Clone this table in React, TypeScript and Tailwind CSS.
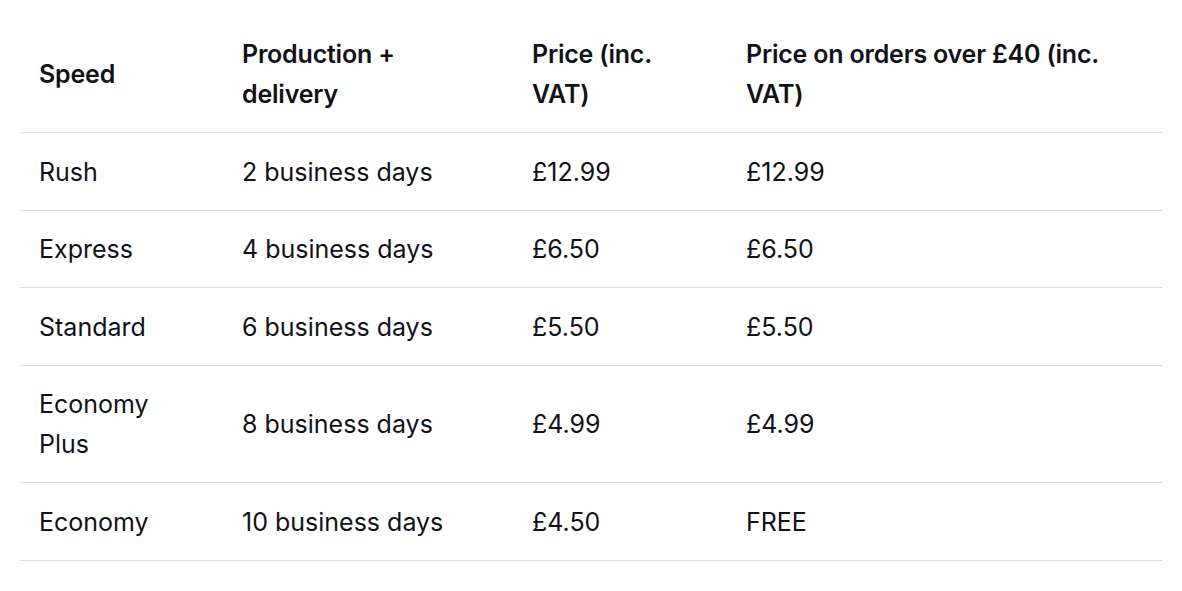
import React from "react";

const rows = [
  ["Rush", "2 business days", "£12.99", "£12.99"],
  ["Express", "4 business days", "£6.50", "£6.50"],
  ["Standard", "6 business days", "£5.50", "£5.50"],
  ["Economy Plus", "8 business days", "£4.99", "£4.99"],
  ["Economy", "10 business days", "£4.50", "FREE"],
];

export default function App() {
  return (
    <div className="min-h-screen bg-white px-[20px] pt-[15px]" style={{ fontFamily: "Inter, 'Noto Sans', sans-serif" }}>
      <table className="w-[1142px] table-fixed border-collapse text-[25px] leading-[40px] text-[#111118]">
        <colgroup>
          <col className="w-[203px]" />
          <col className="w-[290px]" />
          <col className="w-[214px]" />
          <col className="w-[435px]" />
        </colgroup>
        <thead>
          <tr className="border-b border-[#dcdcdc]">
            <th className="pt-[19px] pb-[18px] pl-[19px] pr-[24px] text-left align-middle font-semibold tracking-[-0.2px]">Speed</th>
            <th className="pt-[19px] pb-[18px] pl-[19px] pr-[24px] text-left align-middle font-semibold tracking-[-0.2px]">Production + delivery</th>
            <th className="pt-[19px] pb-[18px] pl-[19px] pr-[24px] text-left align-middle font-semibold tracking-[-0.2px]">Price (inc. VAT)</th>
            <th className="pt-[19px] pb-[18px] pl-[19px] pr-[24px] text-left align-middle font-semibold tracking-[-0.2px]">Price on orders over £40 (inc. VAT)</th>
          </tr>
        </thead>
        <tbody>
          {rows.map((r) => (
            <tr key={r[0]} className="border-b border-[#dcdcdc]">
              {r.map((c, i) => (
                <td key={i} className="pt-[18.5px] pb-[18px] pl-[19px] pr-[24px] text-left align-middle font-normal">{c}</td>
              ))}
            </tr>
          ))}
        </tbody>
      </table>
    </div>
  );
}
